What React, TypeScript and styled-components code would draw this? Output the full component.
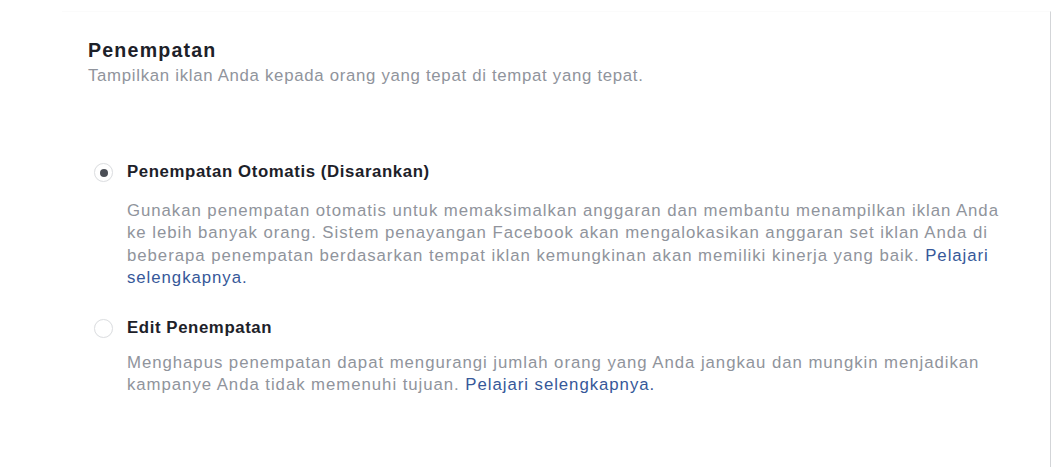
import React from "react";
import styled, { createGlobalStyle } from "styled-components";

const Global = createGlobalStyle`
  html, body { margin: 0; padding: 0; background: #ffffff; }
  body { font-family: "Liberation Sans", Arial, Helvetica, sans-serif; }
`;

const Page = styled.div`
  width: 1053px;
  height: 467px;
  box-sizing: border-box;
  padding: 11px 0 0 62px;
  overflow: hidden;
`;

const Card = styled.section`
  width: 989px;
  height: 456px;
  box-sizing: border-box;
  padding: 26px 38px 0 26px;
  border-right: 1px solid #d3d5d8;
  border-top: 1px solid #fbfbfb;
`;

const Title = styled.h2`
  margin: 0;
  font-size: 19.6px;
  line-height: 24px;
  font-weight: bold;
  letter-spacing: 1.2px;
  color: #1d2129;
`;

const Subtitle = styled.p`
  margin: 3px 0 0;
  font-size: 16.8px;
  line-height: 22.4px;
  letter-spacing: 0.7px;
  color: #90949c;
`;

const Options = styled.div`
  margin-top: 74px;
  display: flex;
  flex-direction: column;
  gap: 28px;
`;

const Option = styled.div`
  display: flex;
  flex-direction: column;
`;

const LabelRow = styled.label`
  display: flex;
  align-items: center;
  gap: 14px;
  padding-left: 6px;
  font-size: 16.8px;
  line-height: 22.4px;
  font-weight: bold;
  letter-spacing: 0.6px;
  color: #1d2129;
  cursor: pointer;
`;

const Radio = styled.span<{ $checked?: boolean }>`
  width: 19px;
  height: 19px;
  box-sizing: border-box;
  border-radius: 50%;
  border: 1px solid #dddfe2;
  background: #ffffff;
  box-shadow: 0 0 1px rgba(0, 0, 0, 0.06);
  display: flex;
  align-items: center;
  justify-content: center;
  flex: none;
  &::after {
    content: "";
    display: ${(p) => (p.$checked ? "block" : "none")};
    width: 8px;
    height: 8px;
    border-radius: 50%;
    background: #4b4f56;
  }
`;

const Description = styled.p<{ $gap: number }>`
  margin: ${(p) => p.$gap}px 0 0;
  padding-left: 39px;
  font-size: 16.8px;
  line-height: 22.4px;
  letter-spacing: 0.95px;
  color: #90949c;
`;

const Link = styled.a`
  color: #365899;
  text-decoration: none;
`;

export default function App() {
  return (
    <>
      <Global />
      <Page>
        <Card>
          <Title>Penempatan</Title>
          <Subtitle>Tampilkan iklan Anda kepada orang yang tepat di tempat yang tepat.</Subtitle>
          <Options>
            <Option>
              <LabelRow>
                <Radio $checked />
                Penempatan Otomatis (Disarankan)
              </LabelRow>
              <Description $gap={16}>
                Gunakan penempatan otomatis untuk memaksimalkan anggaran dan membantu menampilkan iklan Anda ke lebih banyak orang. Sistem penayangan Facebook akan mengalokasikan anggaran set iklan Anda di beberapa penempatan berdasarkan tempat iklan kemungkinan akan memiliki kinerja yang baik.{" "}
                <Link href="#">Pelajari selengkapnya.</Link>
              </Description>
            </Option>
            <Option>
              <LabelRow>
                <Radio />
                Edit Penempatan
              </LabelRow>
              <Description $gap={12}>
                Menghapus penempatan dapat mengurangi jumlah orang yang Anda jangkau dan mungkin menjadikan kampanye Anda tidak memenuhi tujuan.{" "}
                <Link href="#">Pelajari selengkapnya.</Link>
              </Description>
            </Option>
          </Options>
        </Card>
      </Page>
    </>
  );
}
